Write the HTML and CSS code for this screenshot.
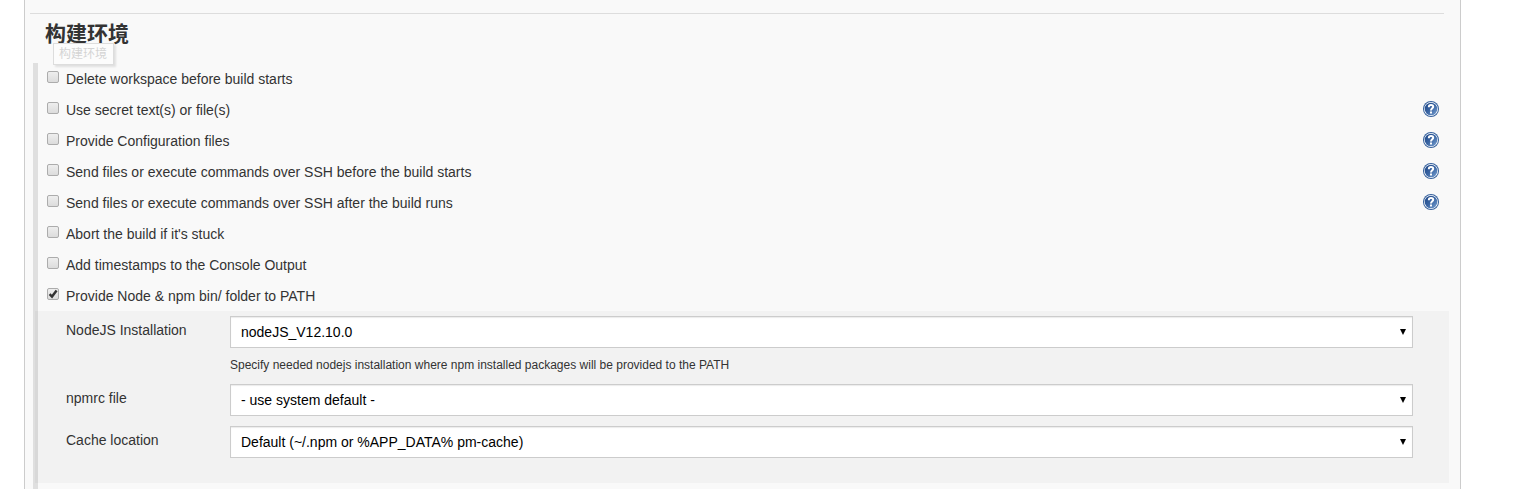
FILE: index.html
```html
<!DOCTYPE html>
<html lang="zh-CN">
<head>
    <meta charset="UTF-8">
    <meta name="viewport" content="width=device-width, initial-scale=1.0">
    <title>构建环境</title>
    <link rel="stylesheet" href="styles.css">
</head>
<body>
    <!-- shared help icon -->
    <svg class="defs" width="0" height="0" aria-hidden="true">
        <defs>
            <linearGradient id="helpFill" x1="0" y1="0" x2="1" y2="1">
                <stop offset="0" stop-color="#1d4585"/>
                <stop offset="0.5" stop-color="#3a65a3"/>
                <stop offset="1" stop-color="#7ba3d3"/>
            </linearGradient>
            <symbol id="help" viewBox="0 0 16 16">
                <circle cx="8" cy="8" r="8" fill="#35609c"/>
                <circle cx="8" cy="8" r="7" fill="#ffffff"/>
                <circle cx="8" cy="8" r="6.3" fill="url(#helpFill)"/>
                <path d="M5.9 6.2V5.6C5.9 4.4 6.8 4 8 4s2.2.6 2.2 1.8c0 1.5-2.2 1.6-2.2 3.7" fill="none" stroke="#ffffff" stroke-width="2"/>
                <rect x="7" y="10.5" width="2" height="2" fill="#ffffff"/>
            </symbol>
        </defs>
    </svg>

    <main class="config">
        <hr class="divider">
        <div class="section-header">
            <h1>构建环境</h1>
            <div class="tooltip" role="tooltip">构建环境</div>
        </div>

        <form class="group">
            <div class="option">
                <input type="checkbox" id="wipe">
                <label for="wipe">Delete workspace before build starts</label>
            </div>
            <div class="option">
                <input type="checkbox" id="secret">
                <label for="secret">Use secret text(s) or file(s)</label>
                <a href="#" class="help" aria-label="Help"><svg><use href="#help"/></svg></a>
            </div>
            <div class="option">
                <input type="checkbox" id="files">
                <label for="files">Provide Configuration files</label>
                <a href="#" class="help" aria-label="Help"><svg><use href="#help"/></svg></a>
            </div>
            <div class="option">
                <input type="checkbox" id="sshBefore">
                <label for="sshBefore">Send files or execute commands over SSH before the build starts</label>
                <a href="#" class="help" aria-label="Help"><svg><use href="#help"/></svg></a>
            </div>
            <div class="option">
                <input type="checkbox" id="sshAfter">
                <label for="sshAfter">Send files or execute commands over SSH after the build runs</label>
                <a href="#" class="help" aria-label="Help"><svg><use href="#help"/></svg></a>
            </div>
            <div class="option">
                <input type="checkbox" id="abort">
                <label for="abort">Abort the build if it's stuck</label>
            </div>
            <div class="option">
                <input type="checkbox" id="timestamps">
                <label for="timestamps">Add timestamps to the Console Output</label>
            </div>
            <div class="option">
                <span class="tick-box">
                    <input type="checkbox" id="node" checked>
                    <svg class="tick" viewBox="0 0 12 12"><path d="M2.6 6.2l2.4 2.4 4.6-6" fill="none" stroke="#333333" stroke-width="2.4"/></svg>
                </span>
                <label for="node">Provide Node &amp; npm bin/ folder to PATH</label>
            </div>

            <div class="settings">
                <div class="field">
                    <label for="installation">NodeJS Installation</label>
                    <div class="select">
                        <select id="installation">
                            <option>nodeJS_V12.10.0</option>
                        </select>
                    </div>
                    <p class="description">Specify needed nodejs installation where npm installed packages will be provided to the PATH</p>
                </div>
                <div class="field">
                    <label for="npmrc">npmrc file</label>
                    <div class="select">
                        <select id="npmrc">
                            <option>- use system default -</option>
                        </select>
                    </div>
                </div>
                <div class="field">
                    <label for="cache">Cache location</label>
                    <div class="select">
                        <select id="cache">
                            <option>Default (~/.npm or %APP_DATA% pm-cache)</option>
                        </select>
                    </div>
                </div>
            </div>
        </form>
    </main>
</body>
</html>
```
FILE: styles.css
```css
* {
    box-sizing: border-box;
}

body {
    margin: 0;
    background-color: #ffffff;
    color: #333333;
    font-family: "Liberation Sans", Arial, "Noto Sans CJK SC", sans-serif;
    font-size: 14px;
    line-height: 20px;
}

.defs {
    position: absolute;
}

.config {
    display: flex;
    flex-direction: column;
    min-height: 100vh;
    margin: 0 68px 0 24px;
    padding-top: 13px;
    background-color: #f9f9f9;
    border: solid #cccccc;
    border-width: 0 1px;
}

.divider {
    width: auto;
    margin: 0 16px 0 5px;
    border: 0;
    border-top: 1px solid #dddddd;
}

.section-header {
    position: relative;
    height: 49px;
    padding: 6px 20px;
}

.section-header h1 {
    margin: 0;
    font-size: 21px;
    line-height: 28px;
}

.tooltip {
    position: absolute;
    top: 29px;
    left: 28px;
    padding: 0 6px 0 5px;
    border: 1px solid #dddddd;
    background-color: #fcfcfc;
    box-shadow: 2px 2px 2px rgba(0, 0, 0, 0.1);
    color: #d4d4d4;
    font-size: 12px;
}

.group {
    flex: 1;
    margin: 0 11px 0 8px;
    border-left: 5px solid #dfdfdf;
}

.option {
    display: flex;
    align-items: flex-start;
    height: 31px;
    padding: 6px 10px 0 9px;
}

.option input {
    appearance: none;
    display: block;
    width: 12px;
    height: 12px;
    margin: 2px 0 0;
    border: 1px solid #acacac;
    border-radius: 2px;
    background: linear-gradient(#eeeeee, #dcdcdc);
}

.option label {
    margin-left: 7px;
}

.tick-box {
    position: relative;
}

.tick {
    position: absolute;
    top: 2px;
    left: 0;
    width: 12px;
    height: 12px;
    pointer-events: none;
}

.help {
    margin: 1px 0 0 auto;
}

.help svg {
    display: block;
    width: 16px;
    height: 16px;
}

.settings {
    display: flex;
    flex-direction: column;
    gap: 10px;
    margin-left: -3px;
    padding: 5px 36px 25px 31px;
    background-color: rgba(0, 0, 0, 0.027);
}

.field {
    display: grid;
    grid-template-columns: 164px 1fr;
}

.field label {
    padding-top: 4px;
}

.select {
    position: relative;
}

.select::after {
    content: "";
    position: absolute;
    top: 13px;
    right: 7px;
    border: solid transparent;
    border-width: 6px 3px 0;
    border-top-color: #000000;
    pointer-events: none;
}

.select select {
    appearance: none;
    display: block;
    width: 100%;
    height: 32px;
    padding: 0 10px;
    border: 1px solid #cccccc;
    border-radius: 0;
    background-color: #ffffff;
    box-shadow: inset 0 1px 1px rgba(0, 0, 0, 0.08);
    color: #000000;
    font-family: inherit;
    font-size: 14px;
}

.description {
    grid-column: 2;
    margin: 8px 0 0;
    font-size: 12px;
    line-height: 18px;
}
```
